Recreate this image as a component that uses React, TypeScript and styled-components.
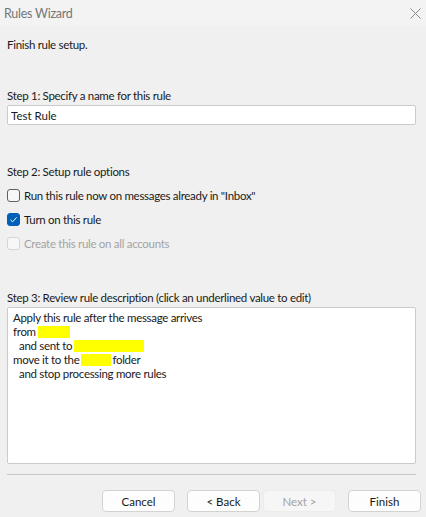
import styled, { createGlobalStyle } from "styled-components";

const GlobalStyle = createGlobalStyle`
  html, body {
    margin: 0;
    padding: 0;
    background: #f0f0f0;
  }
  body {
    font-family: Lato, "Noto Sans", sans-serif;
    font-size: 11.5px;
    letter-spacing: -0.3px;
    color: #1a1a1a;
  }
`;

function CloseIcon() {
  return (
    <svg width="11" height="11" viewBox="0 0 11 11">
      <path d="M0.5 0.5 L10.5 10.5 M10.5 0.5 L0.5 10.5" stroke="#8a8a8a" strokeWidth="1" fill="none" />
    </svg>
  );
}

function CheckMark() {
  return (
    <svg width="9" height="9" viewBox="0 0 9 9">
      <path d="M1.5 4.8 L3.6 6.8 L7.6 2.4" stroke="#ffffff" strokeWidth="1" fill="none" />
    </svg>
  );
}

function Checkbox({ checked, disabled, label }: { checked?: boolean; disabled?: boolean; label: string }) {
  return (
    <CheckRow $disabled={disabled}>
      <Box $checked={checked} $disabled={disabled}>
        {checked && <CheckMark />}
      </Box>
      <span>{label}</span>
    </CheckRow>
  );
}

export default function App() {
  return (
    <>
      <GlobalStyle />
      <Window>
        <TitleBar>
          <Title>Rules Wizard</Title>
          <CloseButton>
            <CloseIcon />
          </CloseButton>
        </TitleBar>
        <Content>
          <Intro>Finish rule setup.</Intro>

          <Label $top={35}>Step 1: Specify a name for this rule</Label>
          <NameInput defaultValue="Test Rule" />

          <Label $top={39}>Step 2: Setup rule options</Label>
          <Options>
            <Checkbox label={'Run this rule now on messages already in "Inbox"'} />
            <Checkbox checked label="Turn on this rule" />
            <Checkbox disabled label="Create this rule on all accounts" />
          </Options>

          <Label $top={39}>Step 3: Review rule description (click an underlined value to edit)</Label>
          <Description>
            <Line>Apply this rule after the message arrives</Line>
            <Line>
              from<Blank $width={32} />
            </Line>
            <Line $indent>
              and sent to<Blank $width={70} />
            </Line>
            <Line>
              move it to the<Blank $width={30} $after />folder
            </Line>
            <Line $indent>and stop processing more rules</Line>
          </Description>

          <Separator />

          <ButtonBar>
            <Button>Cancel</Button>
            <ButtonPair>
              <Button>&lt; Back</Button>
              <Button disabled>Next &gt;</Button>
            </ButtonPair>
            <Button>Finish</Button>
          </ButtonBar>
        </Content>
      </Window>
    </>
  );
}

const Window = styled.div`
  width: 426px;
  height: 517px;
  background: #f0f0f0;
  display: flex;
  flex-direction: column;
  overflow: hidden;
`;

const TitleBar = styled.div`
  height: 26px;
  flex-shrink: 0;
  background: #f3f3f3;
  display: flex;
  align-items: center;
  justify-content: space-between;
  padding: 0 5px 0 4px;
`;

const Title = styled.span`
  font-size: 12.5px;
  letter-spacing: -0.25px;
  color: #767676;
`;

const CloseButton = styled.span`
  display: flex;
  align-items: center;
  justify-content: center;
  width: 11px;
  height: 11px;
`;

const Content = styled.div`
  display: flex;
  flex-direction: column;
  padding: 0 10px 0 7px;
`;

const Intro = styled.div`
  margin-top: 11px;
  line-height: 16px;
`;

const Label = styled.div<{ $top: number }>`
  margin-top: ${(p) => p.$top}px;
  line-height: 16px;
`;

const NameInput = styled.input`
  margin-top: 1px;
  height: 20px;
  box-sizing: border-box;
  border: 1px solid #cbcbcb;
  border-radius: 2px;
  background: #ffffff;
  padding: 0 3px;
  font: inherit;
  color: #1a1a1a;
  outline: none;
`;

const Options = styled.div`
  margin-top: 8px;
  display: flex;
  flex-direction: column;
  gap: 9px;
`;

const CheckRow = styled.label<{ $disabled?: boolean }>`
  display: flex;
  align-items: center;
  gap: 4px;
  height: 15px;
  color: ${(p) => (p.$disabled ? "#a3a3a3" : "#1a1a1a")};
`;

const Box = styled.span<{ $checked?: boolean; $disabled?: boolean }>`
  width: 13px;
  height: 13px;
  box-sizing: border-box;
  border-radius: 3px;
  display: flex;
  align-items: center;
  justify-content: center;
  border: 1px solid
    ${(p) => (p.$checked ? "#005fb8" : p.$disabled ? "#d6d6d6" : "#616161")};
  background: ${(p) => (p.$checked ? "#005fb8" : "#f7f7f7")};
`;

const Description = styled.div`
  margin-top: 1px;
  height: 157px;
  box-sizing: border-box;
  background: #ffffff;
  border: 1px solid #cbcbcb;
  border-radius: 2px;
  padding: 3px 5px;
`;

const Line = styled.div<{ $indent?: boolean }>`
  line-height: 14px;
  padding-left: ${(p) => (p.$indent ? 6 : 0)}px;
  white-space: nowrap;
`;

const Blank = styled.span<{ $width: number; $after?: boolean }>`
  display: inline-block;
  vertical-align: -2px;
  margin-left: 2px;
  margin-right: ${(p) => (p.$after ? 1 : 0)}px;
  width: ${(p) => p.$width}px;
  height: 12px;
  background: #ffff00;
`;

const Separator = styled.div`
  margin-top: 10px;
  height: 1px;
  background: #c6c6c6;
`;

const ButtonBar = styled.div`
  margin-top: 15px;
  display: flex;
  justify-content: flex-end;
  gap: 12px;
  margin-right: -5px;
`;

const ButtonPair = styled.div`
  display: flex;
  gap: 3px;
`;

const Button = styled.button`
  width: 73px;
  height: 22px;
  box-sizing: border-box;
  border: 1px solid ${(p) => (p.disabled ? "#ececec" : "#d3d3d3")};
  border-radius: 4px;
  background: ${(p) => (p.disabled ? "#f6f6f6" : "#fdfdfd")};
  color: ${(p) => (p.disabled ? "#a3a3a3" : "#1a1a1a")};
  font: inherit;
  padding: 0;
`;
